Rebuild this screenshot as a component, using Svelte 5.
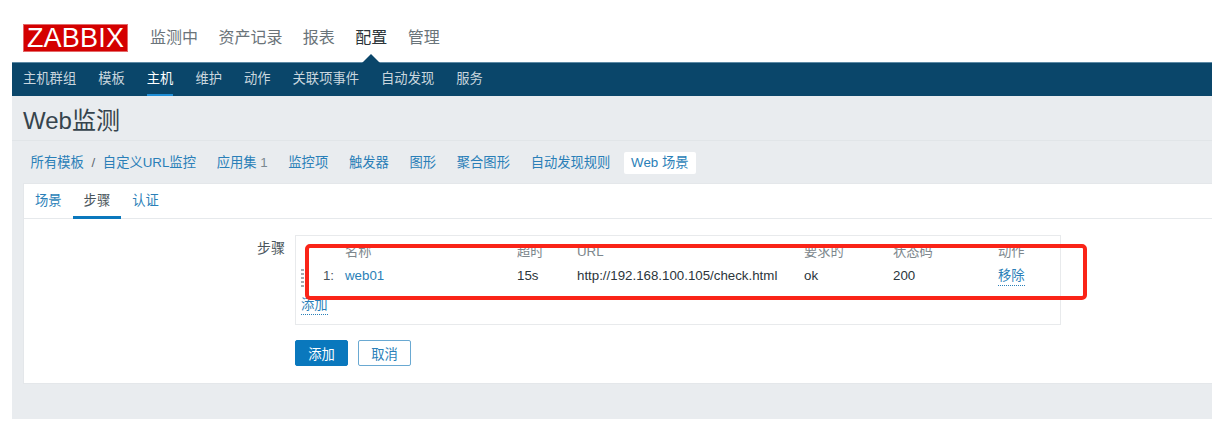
<script>
  const mainNav = [
    { label: '监测中' },
    { label: '资产记录' },
    { label: '报表' },
    { label: '配置', active: true },
    { label: '管理' }
  ]
  const subNav = ['主机群组', '模板', '主机', '维护', '动作', '关联项事件', '自动发现', '服务']
  const hostTabs = ['监控项', '触发器', '图形', '聚合图形', '自动发现规则']
  const columns = ['名称', '超时', 'URL', '要求的', '状态码', '动作']
</script>

<div class="page">
  <header class="top">
    <div class="logo">ZABBIX</div>
    <nav class="main-nav">
      {#each mainNav as item}
        <a class:active={item.active}>{item.label}</a>
      {/each}
    </nav>
  </header>

  <nav class="sub-nav">
    {#each subNav as item}
      <a class:active={item === '主机'}>{item}</a>
    {/each}
  </nav>

  <main class="content">
    <h1>Web监测</h1>

    <div class="crumbs">
      <a>所有模板</a>
      <span class="sep">/</span>
      <a class="last">自定义URL监控</a>
      <a>应用集 <span class="count">1</span></a>
      {#each hostTabs as tab}
        <a>{tab}</a>
      {/each}
      <span class="current">Web 场景</span>
    </div>

    <section class="card">
      <div class="tabs">
        <a>场景</a>
        <a class="active">步骤</a>
        <a>认证</a>
      </div>

      <div class="form">
        <div class="form-row">
          <div class="label">步骤</div>
          <div class="steps">
            <div class="steps-grid head">
              <span></span>
              {#each columns as col}
                <span>{col}</span>
              {/each}
            </div>
            <div class="steps-grid row">
              <span class="num"><i class="grip"></i>1:</span>
              <a class="name">web01</a>
              <span>15s</span>
              <span>http://192.168.100.105/check.html</span>
              <span>ok</span>
              <span>200</span>
              <a class="dotted">移除</a>
            </div>
            <a class="dotted add">添加</a>
          </div>
        </div>

        <div class="buttons">
          <button class="primary">添加</button>
          <button>取消</button>
        </div>
      </div>
    </section>
  </main>

  <div class="highlight"></div>
</div>

<style>
  :global(body) {
    margin: 0;
    background: #fff;
  }

  .page {
    position: relative;
    width: 1200px;
    height: 431px;
    margin-left: 12px;
    font-family: "Liberation Sans", Arial, "Noto Sans CJK SC", sans-serif;
    font-size: 13.3px;
    color: #2b353b;
    overflow: hidden;
  }

  a {
    color: #2a7fb8;
  }

  .top {
    display: flex;
    align-items: flex-start;
    height: 62px;
    padding: 24px 0 0 11px;
    box-sizing: border-box;
  }

  .logo {
    width: 105px;
    height: 28px;
    background: #d40000;
    color: #fff;
    border: 1px solid #e4696a;
    box-sizing: border-box;
    font-size: 27px;
    line-height: 27px;
    letter-spacing: 0.2px;
    text-align: center;
  }

  .main-nav {
    display: flex;
    gap: 20.4px;
    margin-left: 22px;
    font-size: 16px;
    line-height: 28px;
  }

  .main-nav a {
    color: #6a747a;
  }

  .main-nav a.active {
    position: relative;
    color: #2b3338;
  }

  .main-nav a.active::after {
    content: "";
    position: absolute;
    left: 50%;
    bottom: -11px;
    margin-left: -9px;
    border: 9px solid transparent;
    border-top: 0;
    border-bottom-color: #0a466a;
  }

  .sub-nav {
    display: flex;
    gap: 22px;
    height: 34px;
    padding-left: 11px;
    background: #0a466a;
    border-top: 1px solid #5d8aa5;
    box-sizing: border-box;
    line-height: 32px;
  }

  .sub-nav a {
    height: 31px;
    color: #c9d6de;
  }

  .sub-nav a.active {
    color: #fff;
    border-bottom: 2px solid #1f8ed6;
  }

  .content {
    height: 323px;
    background: #e9ecef;
  }

  h1 {
    margin: 0;
    height: 45px;
    padding-left: 11px;
    border-bottom: 1px solid #e1e5e8;
    box-sizing: border-box;
    font-size: 24px;
    font-weight: 400;
    line-height: 49px;
    color: #36444d;
  }

  .crumbs {
    display: flex;
    align-items: center;
    gap: 20.7px;
    height: 43px;
    padding: 1px 0 0 18.6px;
    box-sizing: border-box;
    line-height: 22px;
  }

  .sep {
    margin: 0 -13px 0 -13px;
    color: #5f6a70;
  }

  .count {
    color: #7a8890;
  }

  .current {
    margin-left: -7px;
    padding: 0 7px;
    height: 22px;
    background: #fff;
    color: #2a7fb8;
    border-radius: 2px;
  }

  .card {
    height: 199px;
    margin-left: 12px;
    background: #fff;
    box-shadow: 0 0 0 1px #e4e7ea;
  }

  .tabs {
    display: flex;
    height: 34px;
    border-bottom: 1px solid #e6e9ec;
    line-height: 34px;
  }

  .tabs a {
    padding: 0 11px;
    height: 32px;
  }

  .tabs a.active {
    color: #4a555b;
    border-bottom: 3px solid #0a78bd;
  }

  .form {
    padding-top: 16px;
  }

  .form-row {
    display: flex;
    align-items: flex-start;
  }

  .label {
    width: 261px;
    padding-top: 5px;
    box-sizing: border-box;
    text-align: right;
    font-size: 14px;
    color: #4a555b;
    line-height: 16px;
  }

  .steps {
    width: 766px;
    height: 90px;
    margin-left: 10px;
    border: 1px solid #e8eaec;
    box-sizing: border-box;
    line-height: 16px;
  }

  .steps-grid {
    display: grid;
    grid-template-columns: 49px 172px 60px 227px 89px 105px 1fr;
  }

  .head {
    height: 26px;
    padding-top: 8px;
    box-sizing: border-box;
    color: #7d878d;
  }

  .row {
    height: 31px;
    padding-top: 6px;
    box-sizing: border-box;
  }

  .num {
    position: relative;
    padding-right: 11px;
    text-align: right;
    color: #4a555b;
  }

  .grip {
    position: absolute;
    left: 5px;
    top: 1px;
    width: 3px;
    height: 20px;
    background: repeating-linear-gradient(to bottom, #a3abb0 0 2px, transparent 2px 4px);
  }

  .dotted {
    justify-self: start;
    border-bottom: 1px dotted #2a7fb8;
    height: 17px;
  }

  .add {
    display: inline-block;
    margin: 4px 0 0 5px;
  }

  .buttons {
    display: flex;
    gap: 10px;
    margin: 15px 0 0 271px;
  }

  button {
    width: 53px;
    height: 26px;
    padding: 0;
    font: inherit;
    color: #2a7fb8;
    background: #fff;
    border: 1px solid #6aa9d2;
    border-radius: 2px;
  }

  button.primary {
    color: #fff;
    background: #0a78bd;
    border-color: #0a78bd;
  }

  .highlight {
    position: absolute;
    left: 293px;
    top: 244px;
    width: 782px;
    height: 56px;
    border: 4px solid #fa2418;
    border-radius: 5px;
    box-sizing: border-box;
    pointer-events: none;
  }
</style>
